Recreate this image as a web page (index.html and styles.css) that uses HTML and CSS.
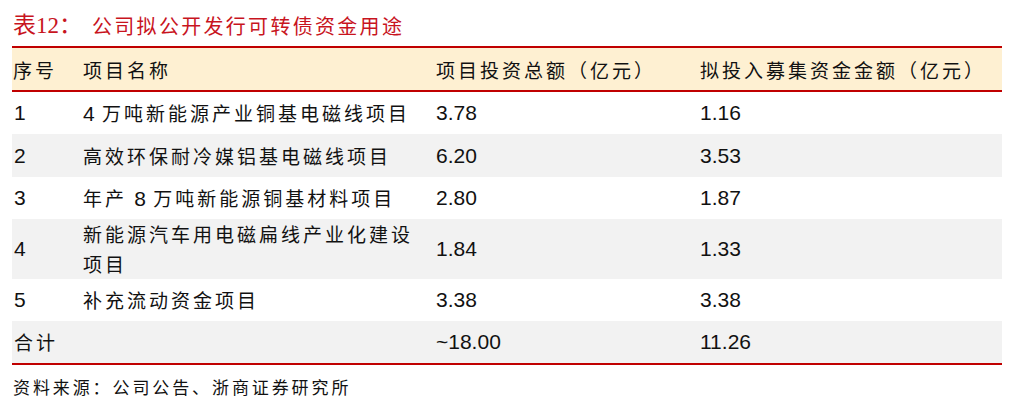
FILE: index.html
```html
<!DOCTYPE html>
<html lang="zh">
<head>
<meta charset="utf-8">
<link rel="stylesheet" href="styles.css">
</head>
<body>
<div class="page">
  <div class="title"><span class="t-num">表12：</span><span class="t-text">公司拟公开发行可转债资金用途</span></div>
  <table class="tbl">
    <colgroup>
      <col class="c1"><col class="c2"><col class="c3"><col class="c4">
    </colgroup>
    <thead>
      <tr class="head">
        <th>序号</th><th>项目名称</th><th>项目投资总额（亿元）</th><th>拟投入募集资金金额（亿元）</th>
      </tr>
    </thead>
    <tbody>
      <tr class="r h42"><td class="num">1</td><td class="cn"><span class="num">4</span> 万吨新能源产业铜基电磁线项目</td><td class="num">3.78</td><td class="num">1.16</td></tr>
      <tr class="r h43 gray"><td class="num">2</td><td class="cn">高效环保耐冷媒铝基电磁线项目</td><td class="num">6.20</td><td class="num">3.53</td></tr>
      <tr class="r h42"><td class="num">3</td><td class="cn">年产 <span class="num">8</span> 万吨新能源铜基材料项目</td><td class="num">2.80</td><td class="num">1.87</td></tr>
      <tr class="r h59 gray"><td class="num">4</td><td class="cn two">新能源汽车用电磁扁线产业化建设项目</td><td class="num">1.84</td><td class="num">1.33</td></tr>
      <tr class="r h42"><td class="num">5</td><td class="cn">补充流动资金项目</td><td class="num">3.38</td><td class="num">3.38</td></tr>
      <tr class="r h42 gray total"><td class="cn" colspan="2">合计</td><td class="num">~18.00</td><td class="num">11.26</td></tr>
    </tbody>
  </table>
  <div class="source">资料来源：公司公告、浙商证券研究所</div>
</div>
</body>
</html>
```

FILE: styles.css
```css
html, body {
  margin: 0;
  padding: 0;
  background: #ffffff;
}

.page {
  padding: 0 12px 0 12px;
  width: 990px;
  font-family: "Noto Sans CJK SC", sans-serif;
  color: #111;
}

.title {
  height: 46px;
  display: flex;
  align-items: center;
  padding-left: 1px;
  padding-top: 5px;
  box-sizing: border-box;
  color: #c8141e;
  font-size: 20px;
  line-height: 1;
}

.t-num {
  font-family: "Liberation Serif", "Noto Sans CJK SC", serif;
  font-size: 23px;
  width: 79px;
}

.t-text {
  letter-spacing: 2.3px;
}

.tbl {
  width: 990px;
  border-collapse: collapse;
  table-layout: fixed;
}

.c1 { width: 71px; }
.c2 { width: 353px; }
.c3 { width: 264px; }
.c4 { width: 302px; }

.head th {
  height: 42px;
  padding: 0;
  background: #fef0d2;
  border-top: 2px solid #c00000;
  border-bottom: 2px solid #c00000;
  text-align: left;
  font-weight: normal;
  font-size: 19px;
  letter-spacing: 3px;
  vertical-align: middle;
  line-height: 1;
}

.head th:first-child {
  padding-left: 1px;
}

.r td {
  padding: 0;
  vertical-align: middle;
  text-align: left;
}

.r td:first-child {
  padding-left: 2px;
}

.h42 td { height: 42px; }
.h43 td { height: 43px; }
.h59 td { height: 59px; }

.gray td {
  background: #f2f2f2;
}

.total td {
  border-bottom: 2px solid #c00000;
}

.num {
  font-family: "Liberation Sans", Arial, sans-serif;
  font-size: 21px;
  letter-spacing: 0;
}

.cn {
  font-size: 19px;
  letter-spacing: 3px;
  line-height: 30px;
}

.cn .num {
  letter-spacing: 0;
}

.r td.two {
  padding-right: 18px;
}

.total .cn {
  padding-left: 1px;
}

.source {
  height: 39px;
  display: flex;
  align-items: center;
  padding-left: 1px;
  padding-top: 3px;
  box-sizing: border-box;
  font-size: 17px;
  letter-spacing: 2.9px;
  color: #111;
}
```
